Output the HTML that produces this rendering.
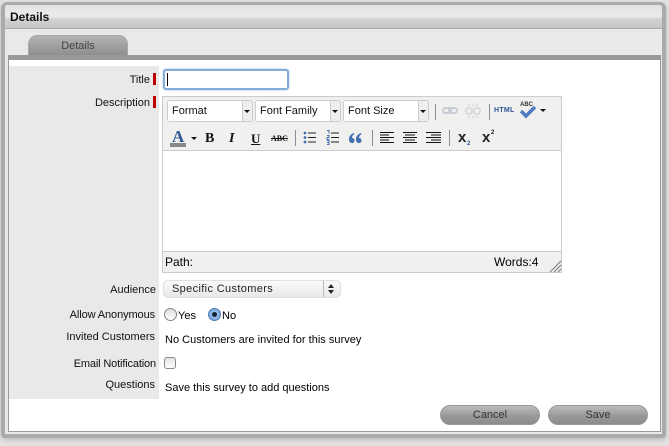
<!DOCTYPE html>
<html><head><meta charset="utf-8"><style>
html,body{margin:0;padding:0}
body{width:669px;height:446px;position:relative;overflow:hidden;background:#e2e2e2;font-family:"Liberation Sans",sans-serif;color:#000;font-size:11px}
div,span{position:absolute;box-sizing:border-box}
.l{right:513px;text-align:right;white-space:nowrap;font-size:11px;line-height:14px;color:#111}
.t{white-space:nowrap;font-size:11px;line-height:14px;color:#000}
.sel{height:22px;background:#fff;border:1px solid #ccc;border-radius:3px 0 0 3px;font-size:11px;line-height:21px;padding-left:4px;color:#111;top:100px}
.arr{top:100px;width:10px;height:22px;background:#eee;border:1px solid #ccc;border-left:0;border-radius:0 3px 3px 0}
.arr:after{content:"";position:absolute;left:1px;top:9px;border:3px solid transparent;border-top:3px solid #111}
.sep{width:1px;background:#8a8f9a}
.ic{font-family:"Liberation Serif",serif;font-weight:bold;font-size:12px;line-height:14px;color:#111;white-space:nowrap}
.btn{top:405px;width:100px;height:20px;border-radius:10px;background:linear-gradient(#bdbdbd,#999 55%,#8c8c8c);border:1px solid #999;text-align:center;font-size:11px;line-height:19px;color:#333}
svg{position:absolute;overflow:visible}
</style></head><body>
<div style="left:1px;top:2px;width:665px;height:436px;background:#e9e9e9;border:4px solid #aaa;border-top-width:3px;border-radius:6px 6px 4px 4px;box-shadow:0 2px 5px #bbb"></div>
<div style="left:5px;top:5px;width:657px;height:24px;background:linear-gradient(#e2e2e2,#ececec 50%,#d2d2d2 60%,#c6c6c6);border-bottom:1px solid #aaa;border-radius:3px 3px 0 0"></div>
<div class="t" style="left:10px;top:10px;font-size:12px;font-weight:bold;line-height:14px;color:#111">Details</div>
<div style="left:28px;top:35px;width:100px;height:20px;border-radius:9px 9px 0 0;background:linear-gradient(#b4b4b4,#8e8e8e);border:1px solid #aaa;border-bottom:0;text-align:center;font-size:11px;line-height:20px;color:#444">Details</div>
<div style="left:8px;top:55px;width:653px;height:377px;background:#fff;border:1px solid #9a9a9a;border-top:5px solid #999"></div>
<div style="left:9px;top:66px;width:150px;height:333px;background:#e9e9e9"></div>

<div class="l" style="top:73px;right:519px">Title</div>
<div style="left:153px;top:73px;width:3px;height:12px;background:#c00000"></div>
<div style="left:163px;top:69px;width:126px;height:21px;background:#fff;border:2px solid #83acd8;border-radius:3px;box-shadow:0 0 2px #9dc0e4"></div>
<div style="left:167px;top:73px;width:1px;height:13px;background:#000"></div>
<div class="l" style="top:96px;right:519px">Description</div>
<div style="left:153px;top:96px;width:3px;height:12px;background:#c00000"></div>

<div style="left:162px;top:96px;width:400px;height:177px;background:#fff;border:1px solid #ccc"></div>
<div style="left:163px;top:97px;width:398px;height:54px;background:#f0f0ee;border-bottom:1px solid #ccc"></div>
<div class="sel" style="left:167px;width:76px">Format</div><div class="arr" style="left:243px"></div>
<div class="sel" style="left:255px;width:76px">Font Family</div><div class="arr" style="left:331px"></div>
<div class="sel" style="left:343px;width:76px">Font Size</div><div class="arr" style="left:419px"></div>
<div class="sep" style="left:435px;top:104px;height:16px"></div>
<svg style="left:442px;top:105px" width="16" height="12" fill="none" stroke="#c8ccd4" stroke-width="2"><rect x="1" y="3" width="8" height="5" rx="2.500"/><rect x="7" y="3" width="8" height="5" rx="2.500"/></svg>
<svg style="left:465px;top:103px" width="16" height="16" fill="none" stroke="#d2d5dc" stroke-width="1.600"><rect x="1" y="5" width="6" height="6" rx="2.500"/><rect x="9" y="5" width="6" height="6" rx="2.500"/><path d="M8 0v3M8 13v3M3 1l2 2M13 1l-2 2M3 15l2-2M13 15l-2-2" stroke-width="1"/></svg>
<div class="sep" style="left:489px;top:104px;height:16px"></div>
<div class="t" style="left:494px;top:106px;font-size:7px;line-height:10px;font-weight:bold;color:#2f5597;letter-spacing:.3px">HTML</div>
<svg style="left:519px;top:106px" width="18" height="13"><path d="M2 5l5 5L16 1" fill="none" stroke="#4d7cc4" stroke-width="3.500"/></svg>
<div class="t" style="left:520px;top:102px;font-size:6px;line-height:7px;font-weight:bold;color:#333">ABC</div>
<svg style="left:540px;top:109px" width="7" height="4"><path d="M0 0h6L3 3z" fill="#111"/></svg>

<div class="ic" style="left:172px;top:128px;font-size:17px;line-height:17px;color:#2f5597">A</div>
<div style="left:170px;top:143px;width:16px;height:4px;background:#888"></div>
<svg style="left:191px;top:137px" width="7" height="4"><path d="M0 0h6L3 3z" fill="#111"/></svg>
<div class="ic" style="left:205px;top:132px;font-size:14px">B</div>
<div class="ic" style="left:229px;top:132px;font-size:14px;font-style:italic">I</div>
<div class="ic" style="left:251px;top:132px;font-size:13px;text-decoration:underline">U</div>
<div class="ic" style="left:271px;top:132px;font-size:8px;text-decoration:line-through;font-weight:bold">ABC</div>
<div class="sep" style="left:295px;top:130px;height:16px"></div>
<svg style="left:303px;top:131px" width="14" height="13"><g fill="#3f6fb5"><circle cx="2" cy="2" r="1.400"/><circle cx="2" cy="6.500" r="1.400"/><circle cx="2" cy="11" r="1.400"/></g><path d="M5 2h8M5 6.500h8M5 11h8" stroke="#222"/></svg>
<svg style="left:326px;top:130px" width="14" height="15"><g stroke="#3f6fb5" fill="none"><path d="M1 0.500h2v3M1 5.500h2v2h-2v2h2M1 10.500h2v4h-2M1 12.500h2"/></g><path d="M5 3h8M5 7.500h8M5 12h8" stroke="#222"/></svg>
<svg style="left:349px;top:133px" width="13" height="10" fill="#3f6fb5"><path d="M5 0C2 1 0 3 0 6.500 0 8.500 1 10 3 10c1.500 0 2.500-1 2.500-2.500S4.500 5 3 5C3 3 4 2 5.500 1zM12 0C9 1 7 3 7 6.500 7 8.500 8 10 10 10c1.500 0 2.500-1 2.500-2.500S11.500 5 10 5c0-2 1-3 2.500-4z"/></svg>
<div class="sep" style="left:372px;top:130px;height:16px"></div>
<svg style="left:380px;top:132px" width="14" height="12" stroke="#111"><path d="M0 .5h14M0 3h9M0 5.500h14M0 8h9M0 10.500h14"/></svg>
<svg style="left:403px;top:132px" width="14" height="12" stroke="#111"><path d="M0 .5h14M2 3h10M0 5.500h14M2 8h10M0 10.500h14"/></svg>
<svg style="left:426px;top:132px" width="15" height="12" stroke="#111"><path d="M0 .5h15M5 3h10M0 5.500h15M5 8h10M0 10.500h15"/></svg>
<div class="sep" style="left:449px;top:130px;height:16px"></div>
<div class="t" style="left:458px;top:131px;font-size:15px;font-weight:bold;color:#222">x</div>
<div class="t" style="left:467px;top:137px;font-size:6px;font-weight:bold;color:#2f5597">2</div>
<div class="t" style="left:482px;top:131px;font-size:15px;font-weight:bold;color:#222">x</div>
<div class="t" style="left:491px;top:126px;font-size:6px;font-weight:bold;color:#222">2</div>

<div style="left:163px;top:251px;width:398px;height:21px;background:#f0f0ee;border-top:1px solid #ccc"></div>
<div class="t" style="left:165px;top:255px;font-size:12px">Path:</div>
<div class="t" style="left:494px;top:255px;font-size:12px">Words:4</div>
<svg style="left:550px;top:261px" width="11" height="11" stroke="#777"><path d="M0 11L11 0M4 11l7-7M8 11l3-3"/></svg>

<div class="l" style="top:283px">Audience</div>
<div style="left:163px;top:280px;width:178px;height:18px;border-radius:5px;background:linear-gradient(#fafafa,#e8e8e8);border:1px solid #e0e0e0;font-size:11px;line-height:17px;padding-left:8px;letter-spacing:.35px;color:#222">Specific Customers</div>
<div style="left:323px;top:281px;width:1px;height:16px;background:#bbb"></div>
<svg style="left:328px;top:284px" width="6" height="10" fill="#222"><path d="M0 4L3 0l3 4zM0 6h6l-3 4z"/></svg>

<div class="l" style="top:308px;right:514px;letter-spacing:-.1px">Allow Anonymous</div>
<div style="left:164px;top:308px;width:13px;height:13px;border-radius:50%;background:linear-gradient(#ddd,#fff);border:1px solid #888"></div>
<div class="t" style="left:178px;top:309px">Yes</div>
<div style="left:208px;top:308px;width:13px;height:13px;border-radius:50%;background:radial-gradient(#bcd7f3,#5d94d6);border:1px solid #4c7cb8"></div>
<div style="left:212px;top:312px;width:5px;height:5px;border-radius:50%;background:#123"></div>
<div class="t" style="left:222px;top:309px">No</div>

<div class="l" style="top:330px;right:514px">Invited Customers</div>
<div class="t" style="left:165px;top:333px;letter-spacing:.02px">No Customers are invited for this survey</div>

<div class="l" style="top:357px;letter-spacing:-.15px">Email Notification</div>
<div style="left:164px;top:357px;width:12px;height:12px;border-radius:3px;background:linear-gradient(#e4e4e4,#fff);border:1px solid #888"></div>

<div class="l" style="top:378px;right:514px">Questions</div>
<div class="t" style="left:165px;top:381px">Save this survey to add questions</div>

<div class="btn" style="left:440px">Cancel</div>
<div class="btn" style="left:548px">Save</div>
</body></html>
